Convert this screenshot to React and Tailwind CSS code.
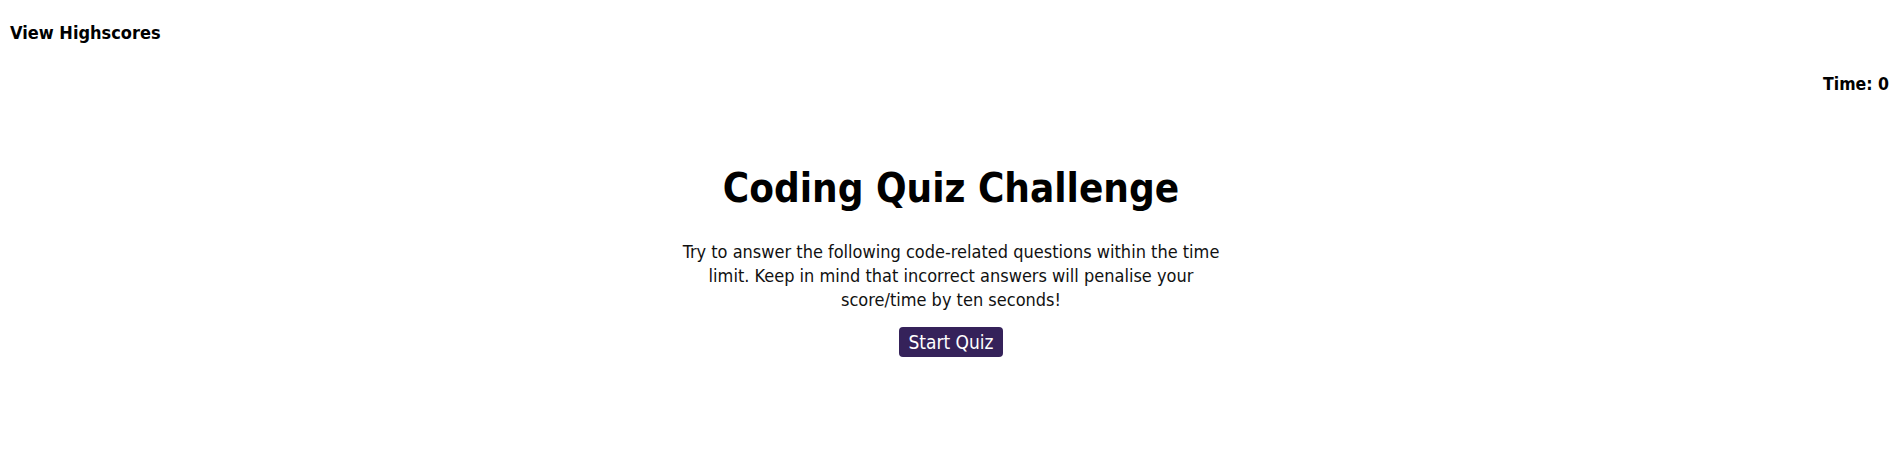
import React from "react";

const App = () => {
  return (
    <div
      className="min-h-[463px] bg-white text-black"
      style={{ fontFamily: '"DejaVu Sans Condensed", "DejaVu Sans", sans-serif' }}
    >
      {/* Header */}
      <header className="px-[10px] pt-[22px]">
        <p className="text-[18px] font-bold leading-[22px]">View Highscores</p>
        <p className="mt-[29px] text-right text-[17.5px] font-bold leading-[22px] pr-[3px]">
          Time: 0
        </p>
      </header>

      {/* Intro */}
      <main className="flex flex-col items-center mt-[69px]">
        <h1 className="text-[40px] font-bold leading-[48px]">Coding Quiz Challenge</h1>
        <p className="mt-[28px] w-[548px] text-center text-[18px] leading-[24px] text-[#111]">
          Try to answer the following code-related questions within the time
          limit. Keep in mind that incorrect answers will penalise your
          score/time by ten seconds!
        </p>
        <button className="mt-[15px] rounded-[4px] bg-[#35225a] px-[9px] py-[3px] text-[19px] leading-[24px] text-white">
          Start Quiz
        </button>
      </main>
    </div>
  );
};

export default App;
